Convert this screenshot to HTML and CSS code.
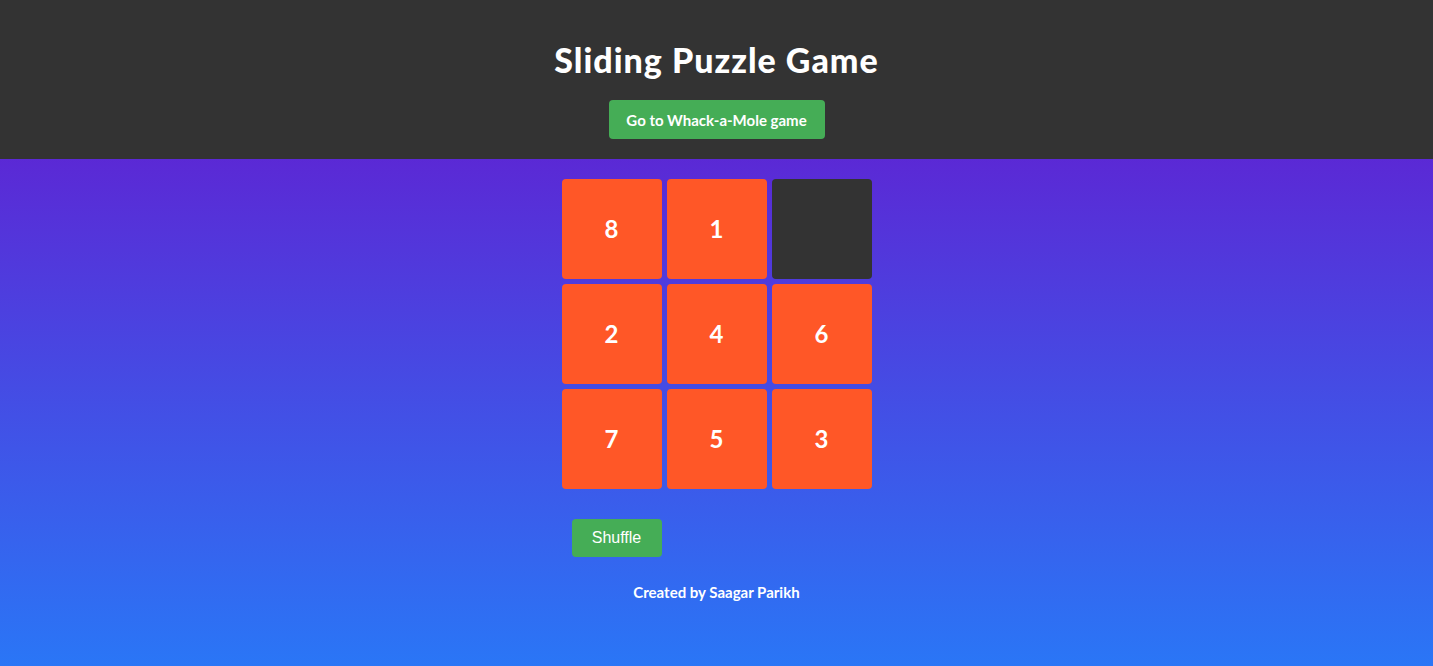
FILE: index.html
```html
<!DOCTYPE html>
<html>
<head>
<meta charset="utf-8">
<link rel="stylesheet" href="styles.css">
</head>
<body>
<header class="top">
  <h1 class="title">Sliding Puzzle Game</h1>
  <a class="nav-btn" href="#">Go to Whack-a-Mole game</a>
</header>
<main class="game">
  <div class="board">
    <div class="tile">8</div>
    <div class="tile">1</div>
    <div class="tile empty"></div>
    <div class="tile">2</div>
    <div class="tile">4</div>
    <div class="tile">6</div>
    <div class="tile">7</div>
    <div class="tile">5</div>
    <div class="tile">3</div>
  </div>
  <div class="controls">
    <button class="shuffle">Shuffle</button>
  </div>
  <p class="credit">Created by Saagar Parikh</p>
</main>
</body>
</html>
```
FILE: styles.css
```css
html, body {
  margin: 0;
  padding: 0;
  height: 100%;
}
body {
  background: linear-gradient(to bottom, #6a11cb 0%, #2a76f6 100%);
  font-family: Lato, "Open Sans", sans-serif;
  color: #fff;
  overflow: hidden;
}
.top {
  background: #333;
  height: 159px;
  box-sizing: border-box;
  padding-top: 39px;
  display: flex;
  flex-direction: column;
  align-items: center;
}
.title {
  margin: 0;
  font-size: 34px;
  font-weight: 900;
  line-height: 41px;
  letter-spacing: 1px;
}
.nav-btn {
  margin-top: 20px;
  width: 216px;
  height: 39px;
  box-sizing: border-box;
  background: #45ad56;
  color: #fff;
  text-decoration: none;
  border-radius: 4px;
  font-size: 15px;
  font-weight: 700;
  display: flex;
  align-items: center;
  justify-content: center;
}
.game {
  display: flex;
  flex-direction: column;
  align-items: center;
  padding-top: 20px;
}
.board {
  display: grid;
  grid-template-columns: repeat(3, 100px);
  grid-auto-rows: 100px;
  gap: 5px;
}
.tile {
  background: #ff5727;
  border-radius: 4px;
  display: flex;
  align-items: center;
  justify-content: center;
  font-size: 24px;
  font-weight: 700;
  padding-bottom: 2px;
  box-sizing: border-box;
}
.tile.empty {
  background: #333;
}
.controls {
  width: 310px;
  padding: 30px 10px 0;
  box-sizing: border-box;
}
.shuffle {
  width: 90px;
  height: 38px;
  background: #45ad56;
  color: #fff;
  border: none;
  border-radius: 4px;
  font-family: "Liberation Sans", Arial, sans-serif;
  font-size: 16px;
  padding: 0;
}
.credit {
  margin: 26px 0 0;
  font-size: 15px;
  font-weight: 700;
  line-height: 18px;
}
```
